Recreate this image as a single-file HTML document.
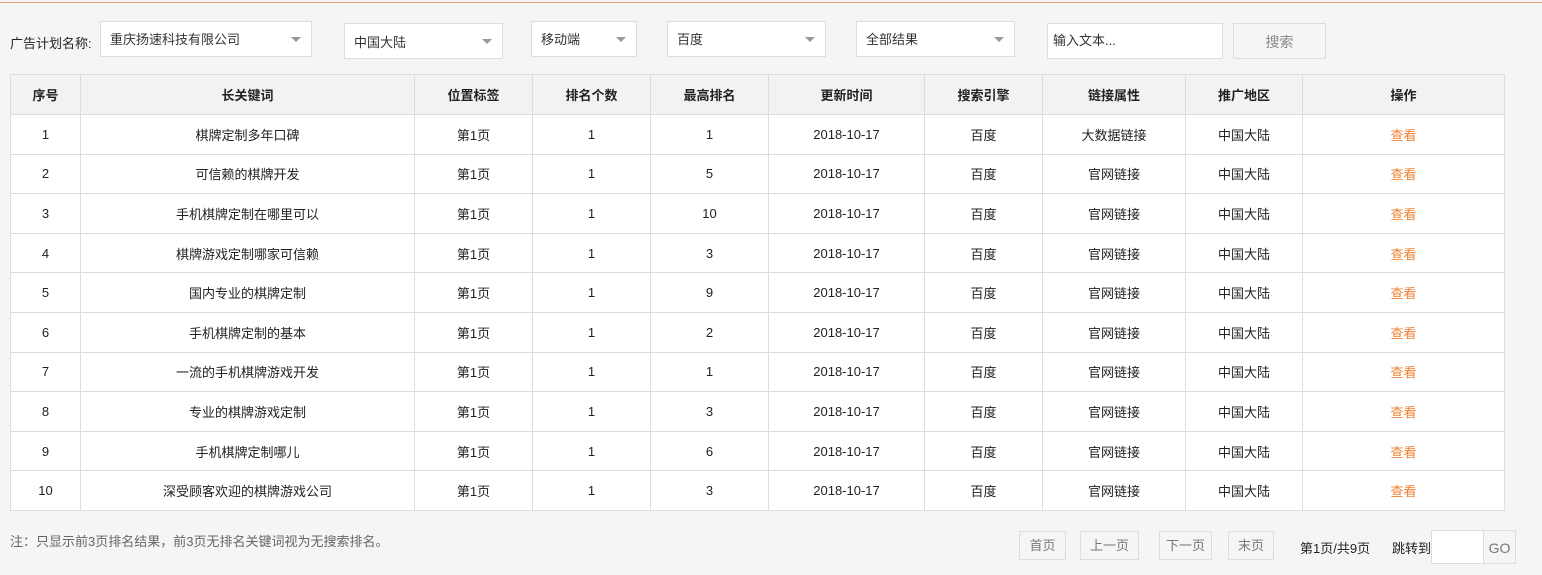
<!DOCTYPE html><html><head><meta charset="utf-8"><style>
*{margin:0;padding:0;box-sizing:border-box}
body{width:1542px;height:575px;background:#f5f5f5;font-family:"Liberation Sans","Noto Sans CJK SC",sans-serif;font-size:13px;color:#222;position:relative;overflow:hidden}
.topline{position:absolute;left:0;top:2px;width:1542px;height:1px;background:#e8a070}
.a{position:absolute}
.sel{position:absolute;background:#fff;border:1px solid #ddd;padding-left:9px;color:#333;font-size:13px}
.sel.ar:after{content:"";position:absolute;right:10px;top:50%;margin-top:-2px;border-left:5px solid transparent;border-right:5px solid transparent;border-top:5px solid #999}
table{position:absolute;left:10px;top:74px;border-collapse:collapse;background:#fff}
td,th{border:1px solid #ddd;text-align:center;height:39.6px;padding:0;font-size:13px}
th{background:#f2f2f2;font-weight:bold;height:40px}
td.o{color:#f08030}
.btn{position:absolute;border:1px solid #ddd;background:#f5f5f5;color:#777;text-align:center;font-size:13px}
</style></head><body>
<div class="topline"></div>
<div class="a" style="left:10px;top:33px">广告计划名称:</div>
<div class="sel ar" style="left:100px;top:21px;width:212px;height:36px;line-height:36px">重庆扬速科技有限公司</div>
<div class="sel ar" style="left:344px;top:23px;width:159px;height:36px;line-height:38px">中国大陆</div>
<div class="sel ar" style="left:531px;top:21px;width:106px;height:36px;line-height:36px">移动端</div>
<div class="sel ar" style="left:667px;top:21px;width:159px;height:36px;line-height:36px">百度</div>
<div class="sel ar" style="left:856px;top:21px;width:159px;height:36px;line-height:36px">全部结果</div>
<div class="sel" style="left:1047px;top:23px;width:176px;height:36px;line-height:34px;padding-left:5px">输入文本...</div>
<div class="btn" style="left:1233px;top:23px;width:93px;height:36px;line-height:36px;font-size:14px;color:#888">搜索</div>
<table>
<tr><th style="width:70px">序号</th><th style="width:334px">长关键词</th><th style="width:118px">位置标签</th><th style="width:118px">排名个数</th><th style="width:118px">最高排名</th><th style="width:156px">更新时间</th><th style="width:118px">搜索引擎</th><th style="width:143px">链接属性</th><th style="width:117px">推广地区</th><th style="width:202px">操作</th></tr>
<tr><td>1</td><td>棋牌定制多年口碑</td><td>第1页</td><td>1</td><td>1</td><td>2018-10-17</td><td>百度</td><td>大数据链接</td><td>中国大陆</td><td class="o">查看</td></tr>
<tr><td>2</td><td>可信赖的棋牌开发</td><td>第1页</td><td>1</td><td>5</td><td>2018-10-17</td><td>百度</td><td>官网链接</td><td>中国大陆</td><td class="o">查看</td></tr>
<tr><td>3</td><td>手机棋牌定制在哪里可以</td><td>第1页</td><td>1</td><td>10</td><td>2018-10-17</td><td>百度</td><td>官网链接</td><td>中国大陆</td><td class="o">查看</td></tr>
<tr><td>4</td><td>棋牌游戏定制哪家可信赖</td><td>第1页</td><td>1</td><td>3</td><td>2018-10-17</td><td>百度</td><td>官网链接</td><td>中国大陆</td><td class="o">查看</td></tr>
<tr><td>5</td><td>国内专业的棋牌定制</td><td>第1页</td><td>1</td><td>9</td><td>2018-10-17</td><td>百度</td><td>官网链接</td><td>中国大陆</td><td class="o">查看</td></tr>
<tr><td>6</td><td>手机棋牌定制的基本</td><td>第1页</td><td>1</td><td>2</td><td>2018-10-17</td><td>百度</td><td>官网链接</td><td>中国大陆</td><td class="o">查看</td></tr>
<tr><td>7</td><td>一流的手机棋牌游戏开发</td><td>第1页</td><td>1</td><td>1</td><td>2018-10-17</td><td>百度</td><td>官网链接</td><td>中国大陆</td><td class="o">查看</td></tr>
<tr><td>8</td><td>专业的棋牌游戏定制</td><td>第1页</td><td>1</td><td>3</td><td>2018-10-17</td><td>百度</td><td>官网链接</td><td>中国大陆</td><td class="o">查看</td></tr>
<tr><td>9</td><td>手机棋牌定制哪儿</td><td>第1页</td><td>1</td><td>6</td><td>2018-10-17</td><td>百度</td><td>官网链接</td><td>中国大陆</td><td class="o">查看</td></tr>
<tr><td>10</td><td>深受顾客欢迎的棋牌游戏公司</td><td>第1页</td><td>1</td><td>3</td><td>2018-10-17</td><td>百度</td><td>官网链接</td><td>中国大陆</td><td class="o">查看</td></tr>
</table>
<div class="a" style="left:10px;top:531px;color:#666;font-size:13px">注：只显示前3页排名结果，前3页无排名关键词视为无搜索排名。</div>
<div class="btn" style="left:1019px;top:531px;width:47px;height:29px;line-height:27px">首页</div>
<div class="btn" style="left:1080px;top:531px;width:59px;height:29px;line-height:27px">上一页</div>
<div class="btn" style="left:1159px;top:531px;width:53px;height:29px;line-height:27px">下一页</div>
<div class="btn" style="left:1228px;top:531px;width:46px;height:29px;line-height:27px">末页</div>
<div class="a" style="left:1300px;top:538px">第1页/共9页</div>
<div class="a" style="left:1392px;top:538px">跳转到:</div>
<div class="a" style="left:1431px;top:530px;width:53px;height:34px;background:#fff;border:1px solid #ddd"></div>
<div class="btn" style="left:1483px;top:530px;width:33px;height:34px;line-height:34px;font-size:14px">GO</div>
</body></html>
